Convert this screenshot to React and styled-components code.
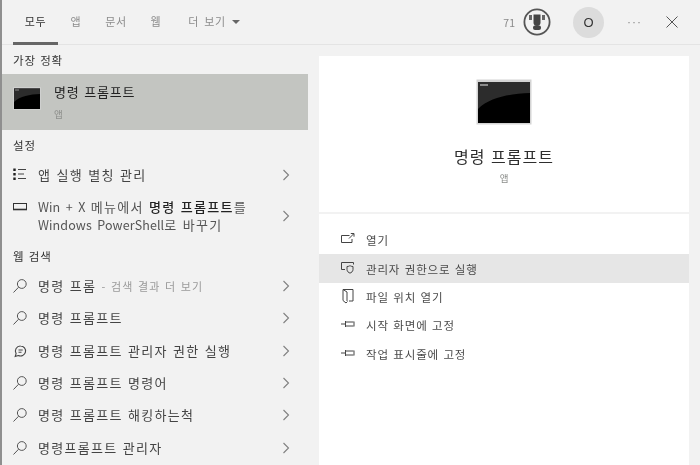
import React from 'react'
import styled, { createGlobalStyle } from 'styled-components'

const Global = createGlobalStyle`
html, body { margin: 0; padding: 0; background: #f2f2f2; }
* { box-sizing: border-box; }
`

const Window = styled.div`
width: 700px;
height: 465px;
overflow: hidden;
background: #f2f2f2;
border-left: 2px solid #8f8f8f;
font-family: "Noto Sans CJK KR", "Liberation Sans", sans-serif;
color: #2b2b2b;
filter: blur(0.3px);
`

const Header = styled.div`
height: 45px;
display: flex;
align-items: center;
border-bottom: 1px solid #e4e4e4;
padding-right: 22px;
`

const Tab = styled.div`
height: 45px;
width: ${(p) => p.w}px;
margin-left: ${(p) => p.ml || 0}px;
display: flex;
align-items: center;
justify-content: center;
gap: 6px;
font-size: 11px;
letter-spacing: 0.7px;
word-spacing: 2px;
color: ${(p) => (p.active ? '#333' : '#8c8c8c')};
border-bottom: 3px solid ${(p) => (p.active ? '#666' : 'transparent')};
`

const Caret = styled.span`
width: 0;
height: 0;
border-left: 4px solid transparent;
border-right: 4px solid transparent;
border-top: 4px solid #666;
margin-top: 2px;
`

const Tools = styled.div`
margin-left: auto;
display: flex;
align-items: center;
`

const Score = styled.span`
font-size: 10.5px;
color: #8a8a8a;
margin-right: 8px;
`

const Avatar = styled.div`
width: 31px;
height: 31px;
border-radius: 50%;
background: #dcdcdc;
color: #333;
font-size: 13px;
font-family: "Liberation Sans", sans-serif;
display: flex;
align-items: center;
justify-content: center;
margin: 0 23px 0 22px;
`

const Dots = styled.span`
color: #8a8a8a;
font-size: 12px;
letter-spacing: 1px;
margin-right: 24px;
font-family: "Liberation Sans", sans-serif;
`

const Body = styled.div`
display: flex;
height: 420px;
`

const Left = styled.div`
width: 306px;
flex-shrink: 0;
`

const Heading = styled.div`
height: ${(p) => p.h}px;
display: flex;
align-items: center;
padding-left: 11px;
font-size: 11.5px;
letter-spacing: 0.8px;
word-spacing: 1px;
color: #333;
`

const Best = styled.div`
height: 56px;
background: #c3c5c1;
display: flex;
align-items: flex-start;
padding: 9px 0 0 11px;
gap: 13px;
`

const BestIcon = styled.div`
margin-top: 4px;
`

const BestText = styled.div`
display: flex;
flex-direction: column;
gap: 8px;
`

const BestTitle = styled.div`
font-size: 13px;
line-height: 17px;
letter-spacing: 0.8px;
word-spacing: 1px;
color: #222;
`

const Sub = styled.div`
font-size: 9.5px;
line-height: 13px;
color: #8d8f8c;
`

const Row = styled.div`
height: ${(p) => p.h || 32.3}px;
display: flex;
align-items: center;
padding-left: 10px;
`

const RowIcon = styled.div`
width: 26px;
flex-shrink: 0;
display: flex;
align-items: center;
align-self: ${(p) => (p.top ? 'flex-start' : 'center')};
padding-top: ${(p) => (p.top ? 9 : 0)}px;
`

const RowText = styled.div`
flex: 1;
font-size: 13px;
line-height: 18px;
letter-spacing: 1.3px;
word-spacing: 1px;
color: ${(p) => p.color || '#444'};
white-space: nowrap;
`

const Latin = styled.span`
font-size: 12.5px;
letter-spacing: 0.1px;
word-spacing: 2.5px;
`

const Dim = styled.span`
color: #9a9a9a;
font-size: 11px;
letter-spacing: 1.1px;
`

const Strong = styled.b`
font-weight: 500;
color: #222;
`

const Chevron = styled.svg`
width: 8px;
height: 12px;
margin-right: 18px;
flex-shrink: 0;
fill: none;
stroke: #808080;
stroke-width: 1.1;
`

const Right = styled.div`
width: 370px;
margin: 11px 0 0 11px;
background: #fff;
`

const Preview = styled.div`
height: 158px;
display: flex;
flex-direction: column;
align-items: center;
padding-top: 23px;
border-bottom: 2px solid #f2f2f2;
`

const PreviewTitle = styled.div`
font-size: 16px;
line-height: 22px;
letter-spacing: 1px;
word-spacing: 1px;
color: #2e2e2e;
margin-top: 20px;
`

const PreviewSub = styled(Sub)`
margin-top: 5px;
`

const Actions = styled.div`
padding-top: 12px;
`

const Action = styled.div`
height: 28.4px;
display: flex;
align-items: center;
padding-left: 21px;
gap: 10px;
font-size: 11.5px;
letter-spacing: 0.85px;
word-spacing: 1px;
color: #4a4a4a;
background: ${(p) => (p.active ? '#e6e6e6' : 'transparent')};
`

const ActionIcon = styled.svg`
width: 16px;
height: 16px;
flex-shrink: 0;
fill: none;
stroke: #444;
stroke-width: 1;
margin-top: -2px;
`

const Console = ({ size, height }) => (
  <svg width={size} height={height} viewBox="0 0 56 46" style={{ flexShrink: 0, display: 'block' }}>
    <rect x="0.5" y="0.5" width="55" height="45" fill="#d4d4d4" />
    <rect x="2" y="3" width="52" height="41" fill="#000" />
    <path d="M2 3h52v11C34 15 14 18 2 30z" fill="#2c2c2c" />
    <rect x="4" y="5" width="8" height="2" fill="#8a8a8a" />
  </svg>
)

const Search = () => (
  <svg width="16" height="16" viewBox="0 0 16 16" fill="none" stroke="#555" strokeWidth="1">
    <circle cx="9.8" cy="6" r="4.4" />
    <path d="M6.6 9.2 1.5 14.5" />
  </svg>
)

const Bubble = () => (
  <svg width="16" height="16" viewBox="0 0 16 16" fill="none" stroke="#444" strokeWidth="1.1">
    <path d="M8.6 3a5 5 0 1 1-2.2 9.5L3.2 13.4l.9-2.8A5 5 0 0 1 8.6 3z" />
    <path d="M6.5 7h4.2M6.5 9.2h3" />
  </svg>
)

const ListIcon = () => (
  <svg width="16" height="16" viewBox="0 0 16 16" fill="none" stroke="#444" strokeWidth="1">
    <path d="M2.5 1.5v2.4M2.5 6v2.4M2.5 10.6v2.4" stroke="#222" strokeWidth="2.4" />
    <path d="M6 2.5h8M6 7h6M6 11.5h8" />
  </svg>
)

const Monitor = () => (
  <svg width="16" height="16" viewBox="0 0 16 16" fill="none" stroke="#333" strokeWidth="1">
    <rect x="1.5" y="4.5" width="13" height="6" />
    <path d="M1 10.5h14" strokeWidth="1.6" />
  </svg>
)

const Open = () => (
  <ActionIcon viewBox="0 0 16 16">
    <path d="M9.5 4.5H1.5v7h10.5V8" />
    <path d="M9 7.5 13.5 3M10.8 2.5h3.2v3.2" />
  </ActionIcon>
)

const Admin = () => (
  <ActionIcon viewBox="0 0 16 16">
    <path d="M5 9.5H1.5v-7h12v2" />
    <path d="M7 6.5c1.8 0 2.6-.6 3-1 .4.4 1.2 1 3 1v3c0 2-1.7 3.2-3 3.6-1.3-.4-3-1.6-3-3.6z" />
  </ActionIcon>
)

const Folder = () => (
  <ActionIcon viewBox="0 0 16 16">
    <path d="M3 1.5h10v11.5H9" />
    <path d="M3 1.5v11l3 2.5 1.5-1.5" />
    <path d="M3 1.5 7 4v9" />
  </ActionIcon>
)

const Pin = () => (
  <ActionIcon viewBox="0 0 16 16">
    <path d="M1 8h5M5.5 5v6M5.5 6h8M5.5 10h8M14 5.5v5" />
  </ActionIcon>
)

const Trophy = () => (
  <svg width="28" height="28" viewBox="0 0 28 28">
    <circle cx="14" cy="14" r="12.6" fill="none" stroke="#555" strokeWidth="1.8" />
    <rect x="6" y="7" width="3" height="5" fill="#666" />
    <rect x="19" y="7" width="3" height="5" fill="#666" />
    <path d="M10.5 6.5h7v8a3.5 3.5 0 0 1-7 0z" fill="#444" />
    <rect x="10" y="17.5" width="8" height="4.5" rx="2" fill="#444" />
  </svg>
)

const Close = () => (
  <svg width="12" height="12" viewBox="0 0 12 12" fill="none" stroke="#555" strokeWidth="1">
    <path d="M.5.5l11 11M11.5.5l-11 11" />
  </svg>
)

const webResults = [
  { icon: <Search />, text: '명령 프롬프트' },
  { icon: <Bubble />, text: '명령 프롬프트 관리자 권한 실행' },
  { icon: <Search />, text: '명령 프롬프트 명령어' },
  { icon: <Search />, text: '명령 프롬프트 해킹하는척' },
  { icon: <Search />, text: '명령프롬프트 관리자' },
]

const actions = [
  { icon: <Open />, label: '열기' },
  { icon: <Admin />, label: '관리자 권한으로 실행', active: true },
  { icon: <Folder />, label: '파일 위치 열기' },
  { icon: <Pin />, label: '시작 화면에 고정' },
  { icon: <Pin />, label: '작업 표시줄에 고정' },
]

const Arrow = () => (
  <Chevron viewBox="0 0 8 12">
    <path d="M1.5 1 6.5 6l-5 5" />
  </Chevron>
)

export default function App() {
  return (
    <Window>
      <Global />
      <Header>
        <Tab w={45} ml={11} active>모두</Tab>
        <Tab w={36}>앱</Tab>
        <Tab w={44}>문서</Tab>
        <Tab w={36}>웹</Tab>
        <Tab w={78} ml={1}>더 보기<Caret /></Tab>
        <Tools>
          <Score>71</Score>
          <Trophy />
          <Avatar>O</Avatar>
          <Dots>···</Dots>
          <Close />
        </Tools>
      </Header>
      <Body>
        <Left>
          <Heading h={29}>가장 정확</Heading>
          <Best>
            <BestIcon><Console size={28} height={23} /></BestIcon>
            <BestText>
              <BestTitle>명령 프롬프트</BestTitle>
              <Sub>앱</Sub>
            </BestText>
          </Best>
          <Heading h={30}>설정</Heading>
          <Row h={30}>
            <RowIcon><ListIcon /></RowIcon>
            <RowText>앱 실행 별칭 관리</RowText>
            <Arrow />
          </Row>
          <Row h={51}>
            <RowIcon top><Monitor /></RowIcon>
            <RowText color="#555">
              <Latin>Win + X</Latin> 메뉴에서 <Strong>명령 프롬프트</Strong>를<br />
              <Latin>Windows PowerShell</Latin>로 바꾸기
            </RowText>
            <Arrow />
          </Row>
          <Heading h={29}>웹 검색</Heading>
          <Row>
            <RowIcon><Search /></RowIcon>
            <RowText>명령 프롬 <Dim>- 검색 결과 더 보기</Dim></RowText>
            <Arrow />
          </Row>
          {webResults.map((r) => (
            <Row key={r.text}>
              <RowIcon>{r.icon}</RowIcon>
              <RowText>{r.text}</RowText>
              <Arrow />
            </Row>
          ))}
        </Left>
        <Right>
          <Preview>
            <Console size={56} height={46} />
            <PreviewTitle>명령 프롬프트</PreviewTitle>
            <PreviewSub>앱</PreviewSub>
          </Preview>
          <Actions>
            {actions.map((a) => (
              <Action key={a.label} active={a.active}>
                {a.icon}
                {a.label}
              </Action>
            ))}
          </Actions>
        </Right>
      </Body>
    </Window>
  )
}
